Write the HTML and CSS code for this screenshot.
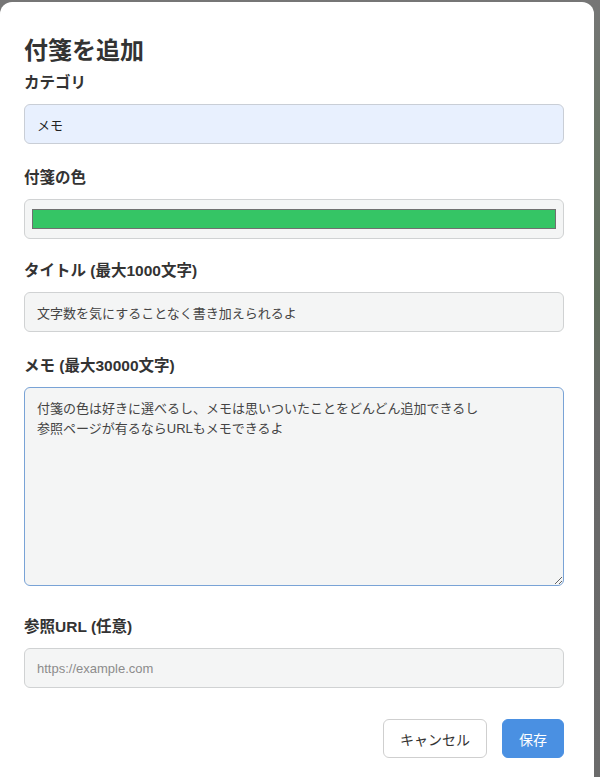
FILE: index.html
```html
<!DOCTYPE html>
<html lang="ja">
<head>
<meta charset="utf-8">
<title>付箋を追加</title>
<link rel="stylesheet" href="styles.css">
</head>
<body>
<div class="overlay">
  <div class="modal">
    <h2 class="modal-title">付箋を追加</h2>
    <form class="note-form">
      <div class="form-group group-category">
        <label class="form-label" for="category">カテゴリ</label>
        <input id="category" class="form-input autofilled" type="text" value="メモ">
      </div>
      <div class="form-group group-color">
        <label class="form-label" for="color">付箋の色</label>
        <input id="color" class="form-color" type="color" value="#35c565">
      </div>
      <div class="form-group group-title">
        <label class="form-label" for="title">タイトル (最大1000文字)</label>
        <input id="title" class="form-input" type="text" value="文字数を気にすることなく書き加えられるよ">
      </div>
      <div class="form-group group-memo">
        <label class="form-label" for="memo">メモ (最大30000文字)</label>
        <textarea id="memo" class="form-textarea is-focused">付箋の色は好きに選べるし、メモは思いついたことをどんどん追加できるし
参照ページが有るならURLもメモできるよ</textarea>
      </div>
      <div class="form-group group-url">
        <label class="form-label" for="url">参照URL (任意)</label>
        <input id="url" class="form-input" type="url" placeholder="https://example.com">
      </div>
      <div class="form-actions">
        <button type="button" class="btn btn-cancel">キャンセル</button>
        <button type="button" class="btn btn-save">保存</button>
      </div>
    </form>
  </div>
</div>
</body>
</html>
```

FILE: styles.css
```css
html, body {
  margin: 0;
  padding: 0;
  height: 100%;
}

body {
  background: linear-gradient(180deg, #767676 0px, #6a7468 120px, #5f6d5c 300px, #686868 420px, #6b6b6b 777px);
  font-family: "Liberation Sans", "Noto Sans CJK JP", sans-serif;
  color: #333;
  overflow: hidden;
}

.overlay {
  padding-top: 2px;
  width: 594px;
}

.modal {
  background: #ffffff;
  border-radius: 12px 12px 0 0;
  padding: 24px 30px 40px 24px;
  min-height: 800px;
  box-sizing: border-box;
}

.modal-title {
  margin: 10px 0 7px;
  font-size: 24px;
  line-height: 29px;
  font-weight: bold;
  color: #333;
}

.note-form {
  display: flex;
  flex-direction: column;
}

.form-group {
  display: flex;
  flex-direction: column;
  margin-bottom: 24px;
}

.group-category {
  margin-bottom: 23px;
}

.group-color {
  margin-bottom: 21px;
}

.group-title {
  margin-bottom: 23px;
}

.form-label {
  font-size: 15.5px;
  line-height: 21px;
  font-weight: bold;
  color: #333;
  margin-bottom: 11px;
}

.form-input,
.form-textarea,
.form-color {
  box-sizing: border-box;
  width: 100%;
  border: 1px solid #d0d2d3;
  border-radius: 6px;
  background: #f4f5f5;
  font-family: "Liberation Sans", "Noto Sans CJK JP", sans-serif;
  font-size: 13px;
  color: #444;
  margin: 0;
}

.form-input {
  height: 40px;
  padding: 0 12px;
}

.form-input::placeholder {
  color: #8c8c8c;
}

.form-input.autofilled {
  background: #e8f0fe;
  border-color: #c9ced6;
  color: #222;
}

.form-color {
  height: 40px;
  padding: 5px 5px;
  cursor: pointer;
  -webkit-appearance: none;
  appearance: none;
}

.form-color::-webkit-color-swatch-wrapper {
  padding: 4px 2px;
}

.form-color::-webkit-color-swatch {
  border: 1px solid #707070;
  border-radius: 0;
}

.form-textarea {
  display: block;
  height: 199px;
  padding: 11px 12px;
  line-height: 19.5px;
  resize: vertical;
  margin-bottom: 6px;
}

.form-textarea.is-focused {
  border-color: #79a3d6;
  outline: none;
}

.form-actions {
  display: flex;
  justify-content: flex-end;
  gap: 15px;
  margin-top: 7px;
}

.btn {
  height: 39px;
  padding: 0 16px;
  border-radius: 6px;
  font-family: "Liberation Sans", "Noto Sans CJK JP", sans-serif;
  font-size: 14px;
  cursor: pointer;
}

.btn-cancel {
  background: #ffffff;
  border: 1px solid #cfcfcf;
  color: #333;
}

.btn-save {
  background: #4a90e2;
  border: 1px solid #4a90e2;
  color: #ffffff;
}
```
